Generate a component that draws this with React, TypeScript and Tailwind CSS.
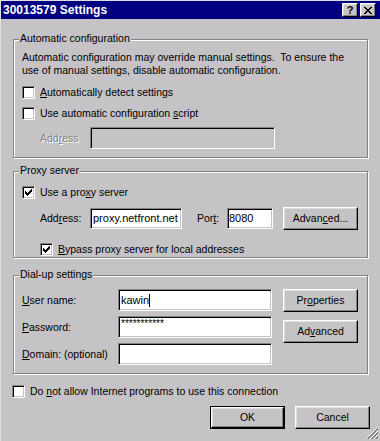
import React from "react";

const FONT = "font-['Liberation_Sans',Arial,sans-serif]";
const SUNKEN =
  "border border-t-[#848284] border-l-[#848284] border-b-white border-r-white shadow-[inset_1px_1px_0_#000,inset_-1px_-1px_0_#c6c3c6]";
const RAISED =
  "border border-t-white border-l-white border-b-black border-r-black shadow-[inset_-1px_-1px_0_#848284,inset_1px_1px_0_#dfdfdf]";

const CHECK = [
  "......X",
  ".....XX",
  "X...XXX",
  "XX.XXX.",
  "XXXXX..",
  ".XXX...",
  "..X....",
];

function CheckBox({ checked }: { checked?: boolean }) {
  return (
    <div className={`w-[13px] h-[13px] shrink-0 bg-white flex items-center justify-center ${SUNKEN}`}>
      {checked && (
        <svg width="7" height="7" viewBox="0 0 7 7" shapeRendering="crispEdges">
          {CHECK.flatMap((row, y) =>
            row.split("").map((c, x) =>
              c === "X" ? <rect key={`${x}-${y}`} x={x} y={y} width="1" height="1" fill="#000" /> : null
            )
          )}
        </svg>
      )}
    </div>
  );
}

function Group({
  title,
  className,
  children,
}: {
  title: string;
  className: string;
  children: React.ReactNode;
}) {
  return (
    <div
      className={`relative w-[355px] border border-[#848284] shadow-[1px_1px_0_#fff,inset_1px_1px_0_#fff] ${className}`}
    >
      <span className="absolute left-[5px] top-[-8px] px-[1px] bg-[#c6c3c6] leading-[13px]">{title}</span>
      {children}
    </div>
  );
}

function Button({ children, className = "" }: { children: React.ReactNode; className?: string }) {
  return (
    <div className={`w-[75px] h-[23px] flex items-center justify-center bg-[#c6c3c6] ${RAISED} ${className}`}>
      {children}
    </div>
  );
}

export default function App() {
  return (
    <div
      className={`relative w-[380px] h-[441px] overflow-hidden bg-[#c6c3c6] border-l border-t border-[#dfdfdf] flex flex-col text-[10.5px] leading-[13px] text-black ${FONT}`}
    >
      {/* Title bar */}
      <div className="h-[18px] bg-[#000080] flex items-center pl-[2px] pr-[4px] shrink-0">
        <span className="text-white font-bold text-[12px] leading-[14px]">30013579 Settings</span>
        <div className="ml-auto flex gap-[2px]">
          <div className={`w-[16px] h-[14px] flex items-center justify-center bg-[#c6c3c6] ${RAISED}`}>
            <span className="font-bold text-[11px] leading-[11px] mt-[1px]">?</span>
          </div>
          <div className={`w-[16px] h-[14px] flex items-center justify-center bg-[#c6c3c6] ${RAISED}`}>
            <svg width="8" height="7" viewBox="0 0 8 7" shapeRendering="crispEdges">
              {[0, 1, 2, 3, 4, 5, 6].map((i) => (
                <React.Fragment key={i}>
                  <rect x={i} y={i} width="2" height="1" fill="#000" />
                  <rect x={6 - i} y={i} width="2" height="1" fill="#000" />
                </React.Fragment>
              ))}
            </svg>
          </div>
        </div>
      </div>

      <div className="flex flex-col pl-[12px]">
        {/* Automatic configuration */}
        <Group title="Automatic configuration" className="mt-[20px] h-[119px]">
          <div className="flex flex-col pt-[11px] pl-[8px]">
            <p className="whitespace-pre">
              {"Automatic configuration may override manual settings.  To ensure the\nuse of manual settings, disable automatic configuration."}
            </p>
            <div className="mt-[9px] h-[13px] flex items-center">
              <CheckBox />
              <span className="ml-[5px]">
                <u>A</u>utomatically detect settings
              </span>
            </div>
            <div className="mt-[8px] h-[13px] flex items-center">
              <CheckBox />
              <span className="ml-[5px]">
                Use automatic configuration <u>s</u>cript
              </span>
            </div>
            <div className="mt-[7px] h-[22px] flex items-center pl-[18px]">
              <span className="w-[50px] text-[#848284] [text-shadow:1px_1px_0_#fff]">
                Add<u>r</u>ess
              </span>
              <div className={`w-[185px] h-[22px] bg-[#c6c3c6] ${SUNKEN}`} />
            </div>
          </div>
        </Group>

        {/* Proxy server */}
        <Group title="Proxy server" className="mt-[13px] h-[87px]">
          <div className="flex flex-col pt-[14px] pl-[8px]">
            <div className="h-[13px] flex items-center">
              <CheckBox checked />
              <span className="ml-[5px]">
                Use a pro<u>x</u>y server
              </span>
            </div>
            <div className="mt-[8px] h-[23px] flex items-center pl-[18px]">
              <span className="w-[50px]">
                Add<u>r</u>ess:
              </span>
              <div className={`w-[92px] h-[21px] bg-white flex items-center pl-[2px] text-[11px] ${SUNKEN}`}>
                proxy.netfront.net
              </div>
              <span className="ml-[15px] w-[30px]">
                Por<u>t</u>:
              </span>
              <div className={`w-[46px] h-[21px] bg-white flex items-center pl-[1px] text-[11px] ${SUNKEN}`}>8080</div>
              <Button className="ml-[10px]">
                <span>
                  Advan<u>c</u>ed...
                </span>
              </Button>
            </div>
            <div className="mt-[13px] h-[13px] flex items-center pl-[18px]">
              <CheckBox checked />
              <span className="ml-[5px]">
                <u>B</u>ypass proxy server for local addresses
              </span>
            </div>
          </div>
        </Group>

        {/* Dial-up settings */}
        <Group title="Dial-up settings" className="mt-[17px] h-[99px]">
          <div className="flex pt-[13px] pl-[8px]">
            <div className="flex flex-col gap-[5px]">
              <div className="h-[22px] flex items-center">
                <span className="w-[96px]">
                  <u>U</u>ser name:
                </span>
                <div className={`w-[154px] h-[22px] bg-white flex items-center pl-[2px] text-[11px] ${SUNKEN}`}>
                  kawin
                  <span className="w-[1px] h-[13px] bg-black" />
                </div>
              </div>
              <div className="h-[22px] flex items-center">
                <span className="w-[96px]">
                  <u>P</u>assword:
                </span>
                <div className={`w-[154px] h-[22px] bg-white flex items-start pt-[2px] pl-[2px] text-[10px] leading-[10px] ${SUNKEN}`}>
                  ***********
                </div>
              </div>
              <div className="h-[22px] flex items-center">
                <span className="w-[96px]">
                  <u>D</u>omain: (optional)
                </span>
                <div className={`w-[154px] h-[22px] bg-white ${SUNKEN}`} />
              </div>
            </div>
            <div className="ml-[11px] flex flex-col gap-[8px]">
              <Button>
                <span>
                  Pr<u>o</u>perties
                </span>
              </Button>
              <Button>
                <span>
                  Ad<u>v</u>anced
                </span>
              </Button>
            </div>
          </div>
        </Group>

        {/* Bottom checkbox */}
        <div className="mt-[11px] h-[13px] flex items-center ml-[-1px]">
          <CheckBox />
          <span className="ml-[5px]">
            Do <u>n</u>ot allow Internet programs to use this connection
          </span>
        </div>

        {/* Buttons */}
        <div className="mt-[8px] w-[357px] flex justify-end gap-[10px]">
          <div className="w-[75px] h-[23px] border border-black flex">
            <div className={`flex-1 flex items-center justify-center ${RAISED}`}>OK</div>
          </div>
          <Button>Cancel</Button>
        </div>
      </div>

      {/* Size grip */}
      <svg
        className="absolute right-[2px] bottom-[2px]"
        width="12"
        height="12"
        viewBox="0 0 12 12"
        shapeRendering="crispEdges"
      >
        {[0, 4, 8].map((o) =>
          Array.from({ length: 12 - o }).map((_, i) => (
            <React.Fragment key={`${o}-${i}`}>
              <rect x={o + i} y={11 - i} width="1" height="1" fill="#fff" />
              <rect x={o + i + 1} y={11 - i} width="1" height="1" fill="#848284" />
              <rect x={o + i + 2} y={11 - i} width="1" height="1" fill="#848284" />
            </React.Fragment>
          ))
        )}
      </svg>
    </div>
  );
}
